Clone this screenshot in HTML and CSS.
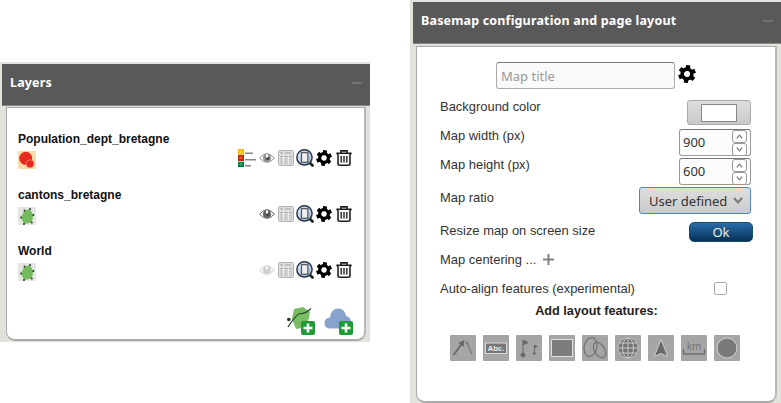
FILE: index.html
```html
<!DOCTYPE html>
<html lang="en">
<head>
<meta charset="utf-8">
<title>Map editor panels</title>
<link rel="stylesheet" href="styles.css">
</head>
<body>
<svg class="defs" aria-hidden="true">
  <defs>
    <linearGradient id="lens" x2="1" y2="1"><stop offset="0" stop-color="#dfe9f5"/><stop offset="1" stop-color="#8eb8df"/></linearGradient>
  </defs>
  <symbol id="gear" viewBox="-8 -8 16 16">
    <g transform="rotate(8)">
      <circle r="4.3" fill="none" stroke="#000" stroke-width="3.2"/>
      <path d="M0-7.8V-5M0 7.8V5M6.75-3.9L4.4-2.5M-6.75 3.9L-4.4 2.5M-6.75-3.9L-4.4-2.5M6.75 3.9L4.4 2.5" stroke="#000" stroke-width="3.8"/>
    </g>
  </symbol>
  <symbol id="legend" viewBox="0 0 18 18">
    <path d="M7 4.3h8M7 10.8h11M7 16.8h6" stroke="#858585" stroke-width="1.4"/>
    <path fill="#ffad00" d="M0 0h6v5.6H0z"/><path fill="#ffdb36" d="M1.3 1.3h3v3h-3z"/>
    <path fill="#b52c0c" d="M0 6h6v6H0z"/><path fill="#f04b18" d="M1.2 7.2h3.2v3H1.2z"/>
    <path fill="#087341" d="M0 12.7h6V18H0z"/><path fill="#18ae65" d="M1.3 14h3v2.4h-3z"/>
  </symbol>
  <symbol id="eye" viewBox="0 0 16 12">
    <path d="M.6 6.2Q8-3 15.4 6.2 8 14.5.6 6.2z" fill="#f7f7f7" stroke="currentColor"/>
    <circle cx="8" cy="6" r="4" fill="currentColor"/><circle cx="8.6" cy="6.4" r="1.7" fill="#444"/><path d="M7 2.5h2v3H7z" fill="#fff"/>
  </symbol>
  <symbol id="eyeoff" viewBox="0 0 16 12">
    <path d="M.6 6.2Q8-3 15.4 6.2 8 14.5.6 6.2z" fill="#f5f5f5" stroke="#d3d3d3"/>
    <circle cx="8" cy="6" r="3.9" fill="#cfcfcf"/><path d="M7 2.5h1.7v3H7z" fill="#fff"/>
  </symbol>
  <symbol id="table" viewBox="0 0 16 16">
    <rect x=".5" y=".5" width="15" height="15" rx="1.2" fill="#dedede" stroke="#b3b3b3"/>
    <path d="M2 3h3M7 3h6M2 6.5h12" stroke="#a5a5a5"/><path d="M5.5 5v10M10.3 5v10" stroke="#eee"/>
    <path d="M2 9h3m1 0h4m1 0h3M2 11.2h3m1 0h4m1 0h3M2 13.4h3m1 0h4m1 0h3" stroke="#b9b9b9"/>
  </symbol>
  <symbol id="lensicon" viewBox="0 0 17 17">
    <path d="M12.3 12.3l3.3 3.3" stroke="#1d2733" stroke-width="2.6" stroke-linecap="round"/>
    <circle cx="8" cy="8" r="7.2" fill="url(#lens)" stroke="#2c3542" stroke-width="1.4"/>
    <rect x="5.2" y="3.5" width="6" height="9" fill="#eee" stroke="#505050" stroke-width="1.1"/>
  </symbol>
  <symbol id="trash" viewBox="0 0 16 16">
    <path d="M.3 3.300h15.400M5 3V.8h6V3" fill="none" stroke="#222" stroke-width="1.7"/>
    <path d="M2 4v9.7q0 1.5 1.5 1.5h9q1.5 0 1.5-1.5V4" fill="#f5f5f5" stroke="#222" stroke-width="1.6"/>
    <path d="M5.2 6v6.5M8 6v6.5M10.8 6v6.5" stroke="#333" stroke-width="1.5"/>
  </symbol>
  <symbol id="polygon" viewBox="0 0 18 18">
    <path fill="#e5e5e5" d="M0 0h18v18H0z"/>
    <path fill="#74ba5c" d="M6.5 3.5l5.500-1L15.5 8 13.5 15.5 6 17 3 10.5z"/>
    <g fill="#263d22"><circle cx="6.5" cy="3.6" r="1"/><circle cx="12" cy="2" r="1"/><circle cx="15.3" cy="8" r="1"/><circle cx="13.8" cy="15.5" r="1"/><circle cx="6" cy="17" r="1"/><circle cx="3" cy="10.5" r="1"/></g>
  </symbol>
  <symbol id="circles" viewBox="0 0 18 18">
    <path fill="#f7dfad" d="M0 0h18v18H0z"/><circle cx="7.7" cy="7.3" r="6.500" fill="#e8291f"/><circle cx="12" cy="12.8" r="4" fill="#e8291f" stroke="#f58b73" stroke-width=".7"/>
  </symbol>
</svg>

<main class="workspace">
  <section class="panel layers">
    <header class="bar"><h2>Layers</h2><i class="fold"></i></header>
    <div class="body">
      <article class="layer">
        <div><h3>Population_dept_bretagne</h3><svg class="thumb"><use href="#circles"/></svg></div>
        <div class="tools"><svg class="t-legend"><use href="#legend"/></svg><svg class="t-eye"><use href="#eye"/></svg><svg class="t-table"><use href="#table"/></svg><svg class="t-lens"><use href="#lensicon"/></svg><svg class="t-gear"><use href="#gear"/></svg><svg class="t-trash"><use href="#trash"/></svg></div>
      </article>
      <article class="layer">
        <div><h3>cantons_bretagne</h3><svg class="thumb"><use href="#polygon"/></svg></div>
        <div class="tools"><svg class="t-eye dark"><use href="#eye"/></svg><svg class="t-table"><use href="#table"/></svg><svg class="t-lens"><use href="#lensicon"/></svg><svg class="t-gear"><use href="#gear"/></svg><svg class="t-trash"><use href="#trash"/></svg></div>
      </article>
      <article class="layer">
        <div><h3>World</h3><svg class="thumb"><use href="#polygon"/></svg></div>
        <div class="tools"><svg class="t-eye"><use href="#eyeoff"/></svg><svg class="t-table"><use href="#table"/></svg><svg class="t-lens"><use href="#lensicon"/></svg><svg class="t-gear"><use href="#gear"/></svg><svg class="t-trash"><use href="#trash"/></svg></div>
      </article>
      <div class="adders">
        <svg width="28" height="28" viewBox="0 0 28 28"><path d="M7 2L16 0 23 5 20 20 9 22 5 12z" fill="#78bd62"/><path d="M1 20Q10 6 14 6.500T24 1.500" fill="none" stroke="#29472a" stroke-width="1.200"/><circle cx="1.800" cy="12.500" r="1.800" fill="#1c3b22"/><rect x="14" y="14" width="14" height="14" rx="2" fill="#1f9b35"/><path d="M21 16.500v9M16.500 21h9" stroke="#fff" stroke-width="2.600"/></svg>
        <svg width="29" height="27" viewBox="0 0 29 27"><path d="M6 20.500Q0 20 .5 14.500 1 10 6 9.500 7 1 14 .5 20.500 0 22 8 27 9 27 14.500 27 20 22 20.500z" fill="#88a3cb"/><rect x="15" y="13" width="14" height="14" rx="2" fill="#1f9b35"/><path d="M22 15.500v9M17.500 20h9" stroke="#fff" stroke-width="2.600"/></svg>
      </div>
    </div>
  </section>

  <section class="panel config">
    <header class="bar"><h2>Basemap configuration and page layout</h2><i class="fold"></i></header>
    <div class="body">
      <div class="title-row"><input class="title" placeholder="Map title"><svg class="title-gear"><use href="#gear"/></svg></div>
      <div class="row"><span>Background color</span><button class="color"><i></i></button></div>
      <div class="row"><span>Map width (px)</span><div class="number"><b>900</b><div class="spin"><svg viewBox="0 0 13 12"><path d="M3.500 8L6.500 4.500 9.500 8"/></svg><svg viewBox="0 0 13 12"><path d="M3.500 4L6.500 7.500 9.500 4"/></svg></div></div></div>
      <div class="row"><span>Map height (px)</span><div class="number"><b>600</b><div class="spin"><svg viewBox="0 0 13 12"><path d="M3.500 8L6.500 4.500 9.500 8"/></svg><svg viewBox="0 0 13 12"><path d="M3.500 4L6.500 7.500 9.500 4"/></svg></div></div></div>
      <div class="row ratio"><span>Map ratio</span><button class="select">User defined<svg width="10" height="7" viewBox="0 0 10 7"><path d="M1 1l4 4.500L9 1" fill="none" stroke="#777" stroke-width="1.900"/></svg></button></div>
      <div class="row resize"><span>Resize map on screen size</span><button class="ok">Ok</button></div>
      <div class="row"><span>Map centering ...<svg class="plus" viewBox="0 0 11 11"><path d="M5.500 0v11M0 5.500h11" stroke="#808080" stroke-width="2"/></svg></span></div>
      <div class="row align"><span>Auto-align features (experimental)</span><i class="check"></i></div>
      <h3 class="features-title">Add layout features:</h3>
      <div class="features">
        <svg viewBox="0 0 26 26"><path d="M3.500 20L12 8.500" stroke="#6b6b6b" stroke-width="2"/><path d="M14.500 5l-1 7-5-4z" fill="#666"/><path d="M17 8l5 11" stroke="#777" stroke-width="1.300"/><path d="M16 5.500l.3 4 2.500-1z" fill="#777"/></svg>
        <svg viewBox="0 0 26 26"><rect x="2.500" y="8" width="21" height="10.500" fill="#777" stroke="#dedede"/><text class="abc" x="13" y="16.200" text-anchor="middle">Abc.</text></svg>
        <svg viewBox="0 0 26 26"><g fill="#686868" stroke="#686868"><path d="M7 20V5l5 2.500L7 10M18.300 19v-9l3 1.500-3 1.500" stroke-width="1"/><circle cx="7" cy="20" r="2"/><circle cx="18.300" cy="18.500" r="1"/></g></svg>
        <svg viewBox="0 0 26 26"><path d="M2.500 4.500h21v17h-21z" fill="#7c7c7c" stroke="#e0e0e0"/></svg>
        <svg viewBox="0 0 26 26"><g fill="none" stroke="#747474" stroke-width="1.300"><ellipse cx="8.500" cy="12" rx="6.300" ry="9.500" transform="rotate(12 8.500 12)"/><ellipse cx="17.500" cy="15" rx="5" ry="8.500" transform="rotate(-32 17.500 15)"/></g></svg>
        <svg viewBox="0 0 26 26"><circle cx="13" cy="13" r="10" fill="#747474" stroke="#ccc" stroke-width=".7"/><g fill="none" stroke="#c7c7c7"><ellipse cx="13" cy="13" rx="5.500" ry="9.800"/><path d="M13 3v20M3 13h20M5 8h16M5 18h16"/></g></svg>
        <svg viewBox="0 0 26 26"><path d="M13 4.500l6.800 17L13 18.500l-6.800 3z" fill="#686868" stroke="#ccc"/></svg>
        <svg viewBox="0 0 26 26"><text class="km" x="13" y="14.500" text-anchor="middle">km</text><path d="M2.500 14v5h21v-5" fill="none" stroke="#6c6c6c" stroke-width="1.300"/></svg>
        <svg viewBox="0 0 26 26"><circle cx="13" cy="13" r="10" fill="#797979" stroke="#d4d4d4"/></svg>
      </div>
    </div>
  </section>
</main>
</body>
</html>
```
FILE: styles.css
```css
* { box-sizing: border-box; }
body { margin: 0; background: #fff; overflow: hidden; font: 13px/14px "Liberation Sans", sans-serif; color: #333; }
h2, h3 { margin: 0; }
svg, i { display: block; flex: none; }
button { padding: 0; }
.defs { position: absolute; width: 0; height: 0; }
.workspace { display: flex; gap: 40px; width: 781px; height: 403px; }
.panel { background: #e2e2da; flex: none; }
.layers { width: 370px; height: 280px; margin-top: 62px; padding: 2px 0 0 2px; }
.config { width: 371px; height: 403px; padding: 2px 0 0 3px; }
.bar { height: 42px; background: #595959; border-bottom: 1px solid #888; display: flex; justify-content: space-between; align-items: center; padding: 0 8px 4px; }
.bar h2 { font: bold 12.5px/16px "Noto Sans", sans-serif; letter-spacing: .17px; color: #fff; }
.fold { width: 10px; height: 2px; background: #747474; }
.body { background: #fff; border: 1px solid #aaa; border-width: 1px 2px 2px 1px; border-color: #aaa #b8b8b8 #aaa #aaa; border-radius: 0 0 9px 9px; }
.layers .body { width: 360px; height: 234px; margin: 1px 0 0 4px; padding: 24px 12px 0 11px; }
.layer { height: 56px; display: flex; justify-content: space-between; }
.layer h3 { font-size: 12px; line-height: 14px; color: #111; }
.thumb { width: 18px; height: 18px; margin-top: 5px; }
.tools { display: flex; align-items: center; height: 18px; margin-top: 17px; }
.t-legend { width: 18px; height: 18px; margin-right: 3px; }
.t-eye { width: 16px; height: 12px; color: #929292; margin-right: 3px; }
.dark { color: #656565; }
.t-table { width: 16px; height: 16px; margin-right: 2px; }
.t-lens { width: 18px; height: 18px; margin-right: 2px; }
.t-gear { width: 16px; height: 16px; margin-right: 4px; }
.t-trash { width: 16px; height: 16px; }
.adders { display: flex; gap: 9px; justify-content: flex-end; align-items: flex-end; margin: 7px -1px 0 0; }
.config .body { width: 361px; height: 357px; margin: 2px 0 0 3px; padding: 15px 24px 0 23px; }
.title-row { display: flex; height: 38px; padding-left: 56px; gap: 3px; }
.title { width: 179px; height: 27px; border: 1px solid #aaa; border-top-color: #777; border-radius: 3px; padding: 0 4px; background: #fafafa; font: 13px "Noto Sans", sans-serif; color: #555; }
.title::placeholder { color: #999; opacity: 1; }
.title-gear { width: 18px; height: 18px; margin-top: 3px; }
.row { display: flex; justify-content: space-between; align-items: flex-start; height: 29px; }
.row > span { display: flex; font-size: 12.95px; }
.color { width: 64px; height: 25px; border: 1px solid #aaa; border-radius: 3px; background: linear-gradient(#dedede, #cacaca); display: flex; justify-content: center; align-items: center; }
.color i { width: 36px; height: 18px; border: 1px solid #888; background: #fff; }
.number { width: 72px; height: 27px; border: 1px solid #999; border-top-color: #777; border-radius: 3px; display: flex; justify-content: space-between; background: #fcfcfc; padding: 0 3px; }
.number b { font: 13px/25px "Noto Sans", sans-serif; }
.spin svg { width: 15px; height: 13px; border: 1px solid #999; border-radius: 3px; background: #fff; fill: none; stroke: #777; stroke-width: 1.3; }
.ratio { height: 35px; }
.ratio > span { padding-top: 4px; }
.select { width: 112px; height: 27px; border: 1px solid #4b87c5; border-radius: 3px; background: linear-gradient(#dedede, #cbcbcb); font: 13px "Noto Sans", sans-serif; color: #333; display: flex; align-items: center; justify-content: space-between; padding: 0 7px 0 9px; }
.resize { height: 31px; }
.resize > span { padding-top: 2px; }
.ok { width: 64px; height: 20px; margin-right: -2px; border: 1px solid #164e66; border-radius: 5px; background: linear-gradient(#2a6da8, #053058); color: #eee; font: 13px/17px "Noto Sans", sans-serif; }
.plus { width: 11px; height: 11px; margin: 1px 0 0 7px; }
.align { height: 22px; }
.check { width: 13px; height: 13px; border: 1px solid #aaa; border-radius: 2px; margin-right: 24px; }
.features-title { text-align: center; font-size: 12.7px; line-height: 14px; padding-left: 2px; color: #222; }
.features { display: flex; gap: 7px; margin: 17px 0 0 10px; }
.features svg { width: 26px; height: 26px; border-radius: 1px; background: #a5a5a5; }
.abc { font: bold 7.5px "Liberation Sans", sans-serif; fill: #eee; }
.km { font: 10px "Noto Sans", sans-serif; fill: #747474; }
```
